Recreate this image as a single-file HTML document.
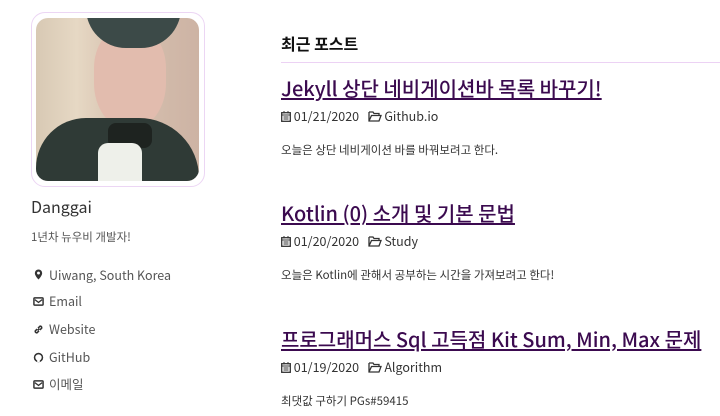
<!DOCTYPE html>
<html><head><meta charset="utf-8"><style>
*{margin:0;padding:0;box-sizing:border-box}
body{width:720px;height:416px;overflow:hidden;background:#fff;font-family:"Noto Sans CJK KR","Liberation Sans",sans-serif;color:#222;position:relative;line-height:1.2}
.abs{position:absolute;white-space:nowrap}
.av{left:31px;top:12px;width:174px;height:175px;border:1px solid #ecd6f4;border-radius:14px}
.img{left:36px;top:18px;width:163px;height:163px;border-radius:12px;overflow:hidden;background:linear-gradient(90deg,#d8c9b4 0%,#e6d8c4 25%,#d7c2b0 50%,#cdb3a4 100%)}
.face{left:58px;top:10px;width:72px;height:100px;background:#e2bcae;border-radius:40% 40% 45% 45%}
.hair{left:50px;top:-10px;width:95px;height:40px;background:#3c4a48;border-radius:0 0 40px 40px}
.coat{left:0;top:100px;width:163px;height:63px;background:#2f3a36;border-radius:50px 60px 0 0}
.neck{left:72px;top:105px;width:44px;height:25px;background:#1e2320;border-radius:8px}
.shirt{left:62px;top:125px;width:44px;height:40px;background:#eef0ea;border-radius:10px 10px 0 0}
.side{color:#555;font-size:12.5px}
.ic{position:absolute;left:33px;width:11px;height:11px}
h2{font-size:16px;font-weight:bold;color:#111}
.t{font-size:20px;font-weight:500;color:#3b0a4f;text-decoration:underline;text-decoration-thickness:2px;text-underline-offset:2px}
.m{font-size:12.5px;color:#333}
.m svg{vertical-align:-1px}
.e{font-size:11.5px;color:#333}
</style></head><body>
<div class="abs av"></div>
<div class="abs img"><div class="abs face"></div><div class="abs hair"></div><div class="abs coat"></div><div class="abs neck"></div><div class="abs shirt"></div></div>

<div class="abs" style="left:31px;top:197px;font-size:16px;color:#333">Danggai</div>
<div class="abs side" style="left:31px;top:231px;font-size:11.5px">1년차 뉴우비 개발자!</div>

<svg class="ic" style="top:269px" viewBox="0 0 12 12"><path d="M6 0.5a4 4 0 0 0-4 4c0 3 4 7 4 7s4-4 4-7a4 4 0 0 0-4-4zm0 2.3a1.6 1.6 0 1 1 0 3.2a1.6 1.6 0 1 1 0-3.2z" fill="#333" fill-rule="evenodd"/></svg>
<div class="abs side" style="left:49px;top:267px">Uiwang, South Korea</div>
<svg class="ic" style="top:296px" viewBox="0 0 12 12"><rect x="1" y="2" width="10" height="8" rx="1" fill="none" stroke="#333" stroke-width="1.6"/><path d="M2 4l4 3l4-3" fill="none" stroke="#333" stroke-width="1.4"/></svg>
<div class="abs side" style="left:49px;top:293px">Email</div>
<svg class="ic" style="top:324px" viewBox="0 0 12 12"><path d="M5 7l2-2M4.5 5.5l-2 2a1.6 1.6 0 0 0 2 2l2-2M7.5 6.5l2-2a1.6 1.6 0 0 0-2-2l-2 2" fill="none" stroke="#333" stroke-width="1.7"/></svg>
<div class="abs side" style="left:49px;top:321px">Website</div>
<svg class="ic" style="top:352px" viewBox="0 0 12 12"><circle cx="6" cy="6" r="4.3" fill="none" stroke="#333" stroke-width="1.7"/><rect x="4.6" y="8" width="2.8" height="3" fill="#fff"/></svg>
<div class="abs side" style="left:49px;top:349px">GitHub</div>
<svg class="ic" style="top:379px" viewBox="0 0 12 12"><rect x="1" y="2" width="10" height="8" rx="1" fill="none" stroke="#333" stroke-width="1.6"/><path d="M2 4l4 3l4-3" fill="none" stroke="#333" stroke-width="1.4"/></svg>
<div class="abs side" style="left:49px;top:376px">이메일</div>

<h2 class="abs" style="left:281px;top:34px">최근 포스트</h2>
<div class="abs" style="left:281px;top:62px;width:439px;height:1px;background:#ecd2f4"></div>

<div class="abs t" style="left:281px;top:76px">Jekyll 상단 네비게이션바 목록 바꾸기!</div>
<div class="abs m" style="left:281px;top:108px"><svg width="10" height="11" viewBox="0 0 10 11"><rect x="0.7" y="1.7" width="8.6" height="8.6" fill="none" stroke="#333" stroke-width="1.3"/><path d="M0.7 4h8.6M3 0v2.5M7 0v2.5M2.5 6h5M2.5 8h5" stroke="#333" stroke-width="1"/></svg> 01/21/2020 &nbsp; <svg width="14" height="11" viewBox="0 0 14 11"><path d="M1 1h4l1 1.5h5v2M1 1v9h10l2-5.5H3.5L1 10" fill="none" stroke="#333" stroke-width="1.3"/></svg> Github.io</div>
<div class="abs e" style="left:281px;top:144px">오늘은 상단 네비게이션 바를 바꿔보려고 한다.</div>

<div class="abs t" style="left:281px;top:201px">Kotlin (0) 소개 및 기본 문법</div>
<div class="abs m" style="left:281px;top:233px"><svg width="10" height="11" viewBox="0 0 10 11"><rect x="0.7" y="1.7" width="8.6" height="8.6" fill="none" stroke="#333" stroke-width="1.3"/><path d="M0.7 4h8.6M3 0v2.5M7 0v2.5M2.5 6h5M2.5 8h5" stroke="#333" stroke-width="1"/></svg> 01/20/2020 &nbsp; <svg width="14" height="11" viewBox="0 0 14 11"><path d="M1 1h4l1 1.5h5v2M1 1v9h10l2-5.5H3.5L1 10" fill="none" stroke="#333" stroke-width="1.3"/></svg> Study</div>
<div class="abs e" style="left:281px;top:269px">오늘은 Kotlin에 관해서 공부하는 시간을 가져보려고 한다!</div>

<div class="abs t" style="left:281px;top:327px">프로그래머스 Sql 고득점 Kit Sum, Min, Max 문제</div>
<div class="abs m" style="left:281px;top:359px"><svg width="10" height="11" viewBox="0 0 10 11"><rect x="0.7" y="1.7" width="8.6" height="8.6" fill="none" stroke="#333" stroke-width="1.3"/><path d="M0.7 4h8.6M3 0v2.5M7 0v2.5M2.5 6h5M2.5 8h5" stroke="#333" stroke-width="1"/></svg> 01/19/2020 &nbsp; <svg width="14" height="11" viewBox="0 0 14 11"><path d="M1 1h4l1 1.5h5v2M1 1v9h10l2-5.5H3.5L1 10" fill="none" stroke="#333" stroke-width="1.3"/></svg> Algorithm</div>
<div class="abs e" style="left:281px;top:395px">최댓값 구하기 PGs#59415</div>
</body></html>
